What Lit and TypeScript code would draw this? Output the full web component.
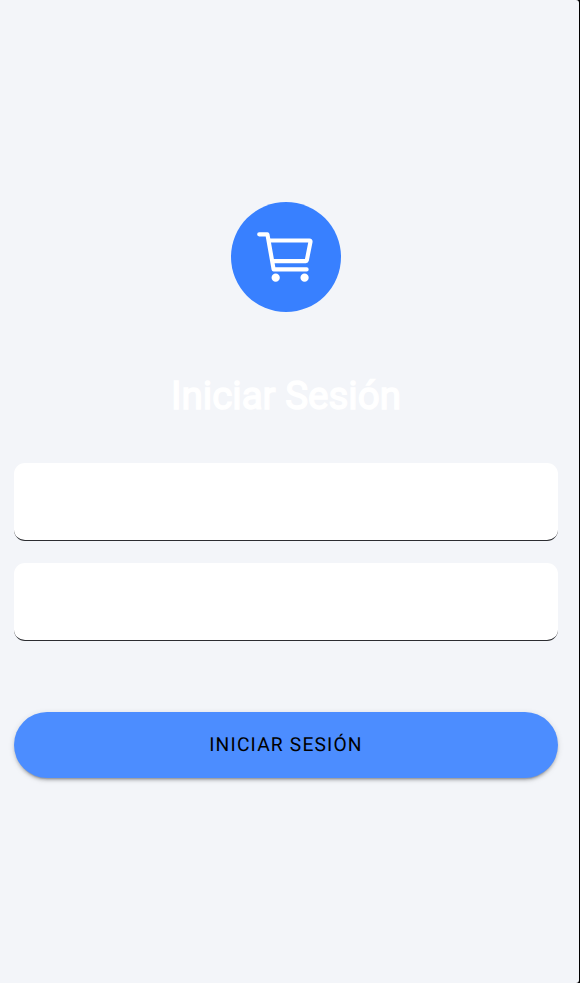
import { LitElement, html, css } from "lit";
import { customElement } from "lit/decorators.js";

@customElement("app-root")
export class AppRoot extends LitElement {
  static styles = css`
    :host {
      display: block;
      height: 983px;
      background: #000;
      font-family: Roboto, "Liberation Sans", sans-serif;
    }
    .screen {
      box-sizing: border-box;
      width: 579px;
      height: 983px;
      padding: 202px 21px 0 14px;
      display: flex;
      flex-direction: column;
      align-items: center;
      background: #f3f5f9;
      border-radius: 0 3px 3px 0;
    }
    .logo {
      width: 110px;
      height: 110px;
      border-radius: 50%;
      background: #3880ff;
      display: flex;
      align-items: center;
      justify-content: center;
    }
    .cart {
      width: 66px;
      height: 66px;
      fill: none;
      stroke: #fff;
      stroke-width: 32px;
      stroke-linecap: round;
      stroke-linejoin: round;
    }
    .dot {
      fill: #fff;
    }
    .title {
      margin: 60px 0 43px;
      font-size: 38.5px;
      line-height: 48px;
      font-weight: 400;
      -webkit-text-stroke: 1.5px #fff;
      color: #fff;
      white-space: nowrap;
    }
    .field {
      box-sizing: border-box;
      width: 100%;
      height: 78px;
      margin: 0 0 22px;
      padding: 0 22px;
      border: 0;
      border-bottom: 1px solid #2c2d31;
      border-radius: 11px;
      background: #fff;
      outline: none;
      font: inherit;
      font-size: 20px;
    }
    .submit {
      width: 100%;
      height: 66px;
      margin: 49px 0 0;
      padding: 0 0 2px;
      border: 0;
      border-radius: 33px;
      background: #4c8dff;
      box-shadow: 0 4.1px 1.4px -2.75px rgba(0, 0, 0, 0.2), 0 2.75px 2.75px 0 rgba(0, 0, 0, 0.14),
        0 1.4px 6.9px 0 rgba(0, 0, 0, 0.12);
      color: #000;
      font-family: inherit;
      font-size: 19.25px;
      font-weight: 400;
      letter-spacing: 1.155px;
      text-rendering: geometricPrecision;
      text-transform: uppercase;
    }
  `;

  render() {
    return html`
      <main class="screen">
        <div class="logo">
          <svg class="cart" viewBox="0 0 512 512" aria-hidden="true">
            <circle class="dot" cx="176" cy="416" r="16" />
            <circle class="dot" cx="400" cy="416" r="16" />
            <polyline points="48 80 112 80 160 352 416 352" />
            <path d="M160 288h249.44a8 8 0 007.85-6.43l28.8-144a8 8 0 00-7.85-9.57H128" />
          </svg>
        </div>
        <h1 class="title">Iniciar Sesión</h1>
        <input class="field" type="text" />
        <input class="field" type="password" />
        <button class="submit" type="button">Iniciar Sesión</button>
      </main>
    `;
  }
}
